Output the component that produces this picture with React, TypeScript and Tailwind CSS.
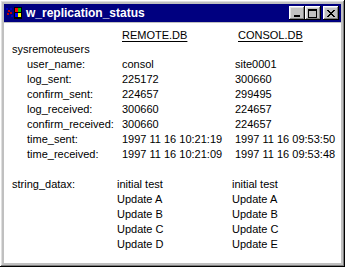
import React from 'react';

const rows: [string, string, string][] = [
  ['user_name:', 'consol', 'site0001'],
  ['log_sent:', '225172', '300660'],
  ['confirm_sent:', '224657', '299495'],
  ['log_received:', '300660', '224657'],
  ['confirm_received:', '300660', '224657'],
  ['time_sent:', '1997 11 16 10:21:19', '1997 11 16 09:53:50'],
  ['time_received:', '1997 11 16 10:21:09', '1997 11 16 09:53:48'],
];

const datax: [string, string][] = [
  ['initial test', 'initial test'],
  ['Update A', 'Update A'],
  ['Update B', 'Update B'],
  ['Update C', 'Update C'],
  ['Update D', 'Update E'],
];

const bevel =
  'shadow-[inset_-1px_-1px_#000000,inset_1px_1px_#ffffff,inset_-2px_-2px_#808080,inset_2px_2px_#dfdfdf]';

function TitleButton({ children, className = '' }: { children: React.ReactNode; className?: string }) {
  return (
    <div className={`w-[16px] h-[14px] bg-[#c0c0c0] flex items-center justify-center ${bevel} ${className}`}>
      {children}
    </div>
  );
}

function AppIcon() {
  return (
    <svg width="16" height="14" viewBox="0 0 16 14" shapeRendering="crispEdges">
      <rect x="0" y="2" width="2" height="2" fill="#0000c0" />
      <rect x="2" y="4" width="2" height="2" fill="#c00000" />
      <rect x="4" y="2" width="2" height="2" fill="#0000c0" />
      <rect x="1" y="7" width="2" height="2" fill="#c00000" />
      <rect x="4" y="6" width="2" height="2" fill="#c00000" />
      <rect x="5" y="9" width="2" height="2" fill="#0000c0" />
      <rect x="8" y="1" width="8" height="12" fill="#000000" />
      <rect x="9" y="2" width="3" height="4" fill="#ff0000" />
      <rect x="12" y="2" width="3" height="4" fill="#00c000" />
      <rect x="9" y="7" width="3" height="4" fill="#0000ff" />
      <rect x="12" y="7" width="3" height="4" fill="#ffff00" />
    </svg>
  );
}

export default function App() {
  return (
    <div
      className={`w-[345px] h-[267px] bg-[#c0c0c0] p-[4px] flex flex-col ${bevel}`}
      style={{ fontFamily: '"Liberation Sans", Arial, sans-serif' }}
    >
      <div className="h-[18px] bg-[#000080] flex items-center pl-[2px] pr-[2px] shrink-0">
        <AppIcon />
        <span className="ml-[4px] text-white font-bold text-[12px] leading-none">w_replication_status</span>
        <div className="ml-auto flex items-center">
          <TitleButton>
            <div className="w-[6px] h-[2px] bg-black mt-[6px] -ml-[1px]" />
          </TitleButton>
          <TitleButton>
            <div className="w-[9px] h-[9px] border border-black border-t-2 -ml-[1px]" />
          </TitleButton>
          <TitleButton className="ml-[2px]">
            <svg width="8" height="7" viewBox="0 0 8 7" shapeRendering="crispEdges" className="-ml-[1px]">
              <path d="M0 0h2v1h-2zM6 0h2v1h-2zM1 1h2v1h-2zM5 1h2v1h-2zM2 2h4v1h-4zM3 3h2v1h-2zM2 4h4v1h-4zM1 5h2v1h-2zM5 5h2v1h-2zM0 6h2v1h-2zM6 6h2v1h-2z" fill="#000" />
            </svg>
          </TitleButton>
        </div>
      </div>
      <div className="flex-1 mt-[1px] bg-white pl-[8px] pt-[6px] text-[11px] leading-[15px] text-black">
        <div className="grid grid-cols-[110px_116px_1fr] leading-[13px]">
          <span />
          <span className="underline underline-offset-[2px]">REMOTE.DB</span>
          <span className="underline underline-offset-[2px]">CONSOL.DB</span>
        </div>
        <div>sysremoteusers</div>
        <div className="grid grid-cols-[110px_113px_1fr]">
          {rows.map(([label, a, b]) => (
            <React.Fragment key={label}>
              <span className="pl-[15px]">{label}</span>
              <span>{a}</span>
              <span>{b}</span>
            </React.Fragment>
          ))}
        </div>
        <div className="grid grid-cols-[105px_115px_1fr] mt-[15px]">
          {datax.map(([a, b], i) => (
            <React.Fragment key={i}>
              <span>{i === 0 ? 'string_datax:' : ''}</span>
              <span>{a}</span>
              <span>{b}</span>
            </React.Fragment>
          ))}
        </div>
      </div>
    </div>
  );
}
